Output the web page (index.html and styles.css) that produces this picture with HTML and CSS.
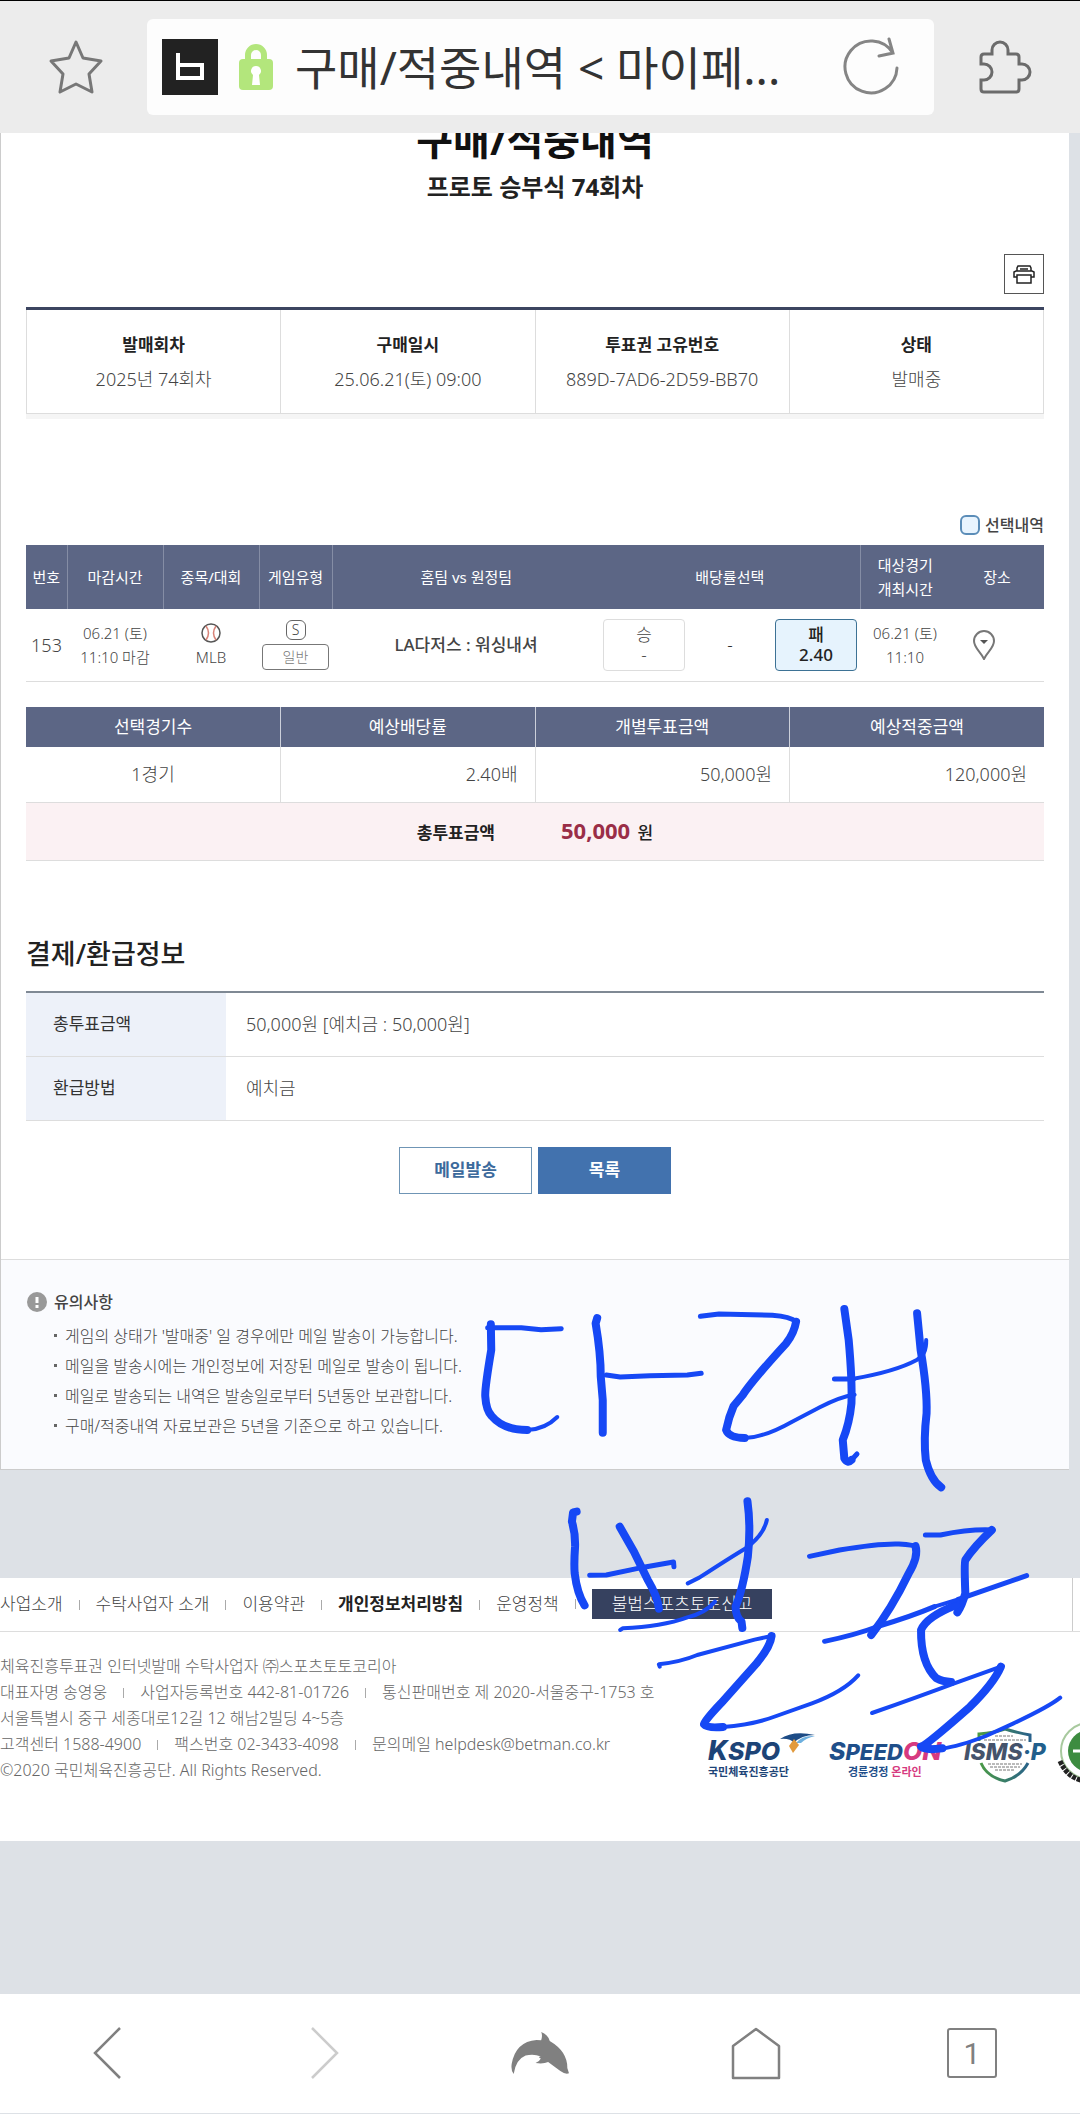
FILE: index.html
```html
<!DOCTYPE html>
<html lang="ko">

<head>
    <meta charset="UTF-8">
    <meta name="viewport" content="width=device-width, initial-scale=1.0">
    <title>구매/적중내역 &lt; 마이페이지</title>
    <link rel="stylesheet" href="styles.css">
</head>

<body>

    <header class="toolbar">
        <button class="tool" aria-label="즐겨찾기">
            <svg width="56" height="56" viewBox="0 0 56 56" fill="none" stroke="#777" stroke-width="3" stroke-linejoin="round"><path d="M28 3L35 19L53 22L41 35L44 53L28 45L12 53L15 35L3 22L21 19Z" /></svg>
        </button>
        <div class="address">
            <svg width="56" height="56" viewBox="0 0 56 56"><path fill="#222" d="M0 0h56v56H0z" /><path d="M16 14V39H40V26H16" fill="none" stroke="#fff" stroke-width="4" /></svg>
            <svg class="lock" width="34" height="46" viewBox="0 0 34 46"><path d="M9 20V11a8 8 0 0 1 16 0v9" fill="none" stroke="#b3e67c" stroke-width="6" /><rect y="15" width="34" height="31" rx="4" fill="#b3e67c" /><path d="M17 22a5 5 0 0 1 3 9l1 10h-8l1-10a5 5 0 0 1 3-9z" fill="#fff" /></svg>
            <span class="address-text">구매/적중내역 &lt; 마이페...</span>
            <button class="tool" aria-label="새로고침">
                <svg width="60" height="60" viewBox="0 0 60 60" fill="none" stroke="#858585" stroke-width="3" stroke-linecap="round"><path d="M56 31A26 26 0 1 1 52 16M48 2L52 16L38 19" /></svg>
            </button>
        </div>
        <button class="tool" aria-label="확장 기능">
            <svg width="56" height="56" viewBox="0 0 56 56" fill="none" stroke="#6b6b6b" stroke-width="3"><path d="M4 25V18q0-3 3-3h8V11a8 8 0 0 1 16 0v4h8q3 0 3 3v7h3a8 8 0 0 1 0 16h-3v9q0 3-3 3H7q-3 0-3-3v-9h3a8 8 0 0 0 0-16z" /></svg>
        </button>
    </header>

    <main class="content">
        <h1>구매/적중내역</h1>
        <p class="round">프로토 승부식 74회차</p>

        <button class="print" aria-label="인쇄">
            <svg width="22" height="19" viewBox="0 0 22 19" fill="none" stroke="#222" stroke-width="1.5"><path d="M4 6V3l1-2h12l1 2v3M7 4h8M4 12H1V7l2-1h16l2 1v5h-3M4 10h14v8H4z" /></svg>
        </button>

        <table class="info">
            <thead>
                <tr><th>발매회차</th><th>구매일시</th><th>투표권 고유번호</th><th>상태</th></tr>
            </thead>
            <tbody>
                <tr><td>2025년 74회차</td><td>25.06.21(토) 09:00</td><td>889D-7AD6-2D59-BB70</td><td>발매중</td></tr>
            </tbody>
        </table>

        <p class="legend"><span class="swatch"></span>선택내역</p>

        <table class="games">
            <colgroup>
                <col class="col-no"><col class="col-time"><col class="col-time"><col class="col-type"><col><col class="col-odds"><col class="col-start"><col class="col-place">
            </colgroup>
            <thead>
                <tr>
                    <th>번호</th>
                    <th>마감시간</th>
                    <th>종목/대회</th>
                    <th>게임유형</th>
                    <th class="no-line">홈팀 vs 원정팀</th>
                    <th>배당률선택</th>
                    <th class="no-line">대상경기<br>개최시간</th>
                    <th>장소</th>
                </tr>
            </thead>
            <tbody>
                <tr>
                    <td class="no">153</td>
                    <td>06.21 (토)<br>11:10 마감</td>
                    <td>
                        <svg class="ball" width="20" height="20" viewBox="0 0 20 20" fill="none"><circle cx="10" cy="10" r="9" stroke="#555" stroke-width="1.5" /><path d="M5 3q5 7 0 14M15 3q-5 7 0 14" stroke="#d98378" stroke-width="1.5" /></svg>
                        MLB
                    </td>
                    <td><span class="single">S</span><span class="type">일반</span></td>
                    <td class="teams">LA다저스 : 워싱내셔</td>
                    <td class="odds-cell">
                        <div class="odds">
                            <button class="odd">승<br>-</button>
                            <span>-</span>
                            <button class="odd selected">패<br>2.40</button>
                        </div>
                    </td>
                    <td>06.21 (토)<br>11:10</td>
                    <td class="place">
                        <svg width="22" height="30" viewBox="0 0 22 30"><path d="M11 29C8 22 1 18 1 11a10 10 0 0 1 20 0C21 18 14 22 11 29z" fill="none" stroke="#777" stroke-width="2" /><path d="M7 10h8l-4 4z" fill="#555" /></svg>
                    </td>
                </tr>
            </tbody>
        </table>

        <table class="summary">
            <thead>
                <tr><th>선택경기수</th><th>예상배당률</th><th>개별투표금액</th><th>예상적중금액</th></tr>
            </thead>
            <tbody>
                <tr><td class="count">1경기</td><td>2.40배</td><td>50,000원</td><td>120,000원</td></tr>
            </tbody>
            <tfoot>
                <tr><td colspan="4"><span class="total-label">총투표금액</span><strong>50,000</strong> 원</td></tr>
            </tfoot>
        </table>

        <h2>결제/환급정보</h2>
        <table class="payment">
            <tr><th>총투표금액</th><td>50,000원 [예치금 : 50,000원]</td></tr>
            <tr><th>환급방법</th><td>예치금</td></tr>
        </table>

        <div class="buttons">
            <button class="btn">메일발송</button>
            <button class="btn btn-primary">목록</button>
        </div>

        <section class="notes">
            <h3>
                <svg width="20" height="20" viewBox="0 0 20 20"><circle cx="10" cy="10" r="10" fill="#999" /><path d="M10 5v6M10 13v3" stroke="#fff" stroke-width="3" /></svg>
                유의사항
            </h3>
            <ul>
                <li>게임의 상태가 '발매중' 일 경우에만 메일 발송이 가능합니다.</li>
                <li>메일을 발송시에는 개인정보에 저장된 메일로 발송이 됩니다.</li>
                <li>메일로 발송되는 내역은 발송일로부터 5년동안 보관합니다.</li>
                <li>구매/적중내역 자료보관은 5년을 기준으로 하고 있습니다.</li>
            </ul>
        </section>
    </main>

    <footer class="footer">
        <nav class="footer-nav">
            <a href="#">사업소개</a>
            <a href="#">수탁사업자 소개</a>
            <a href="#">이용약관</a>
            <a href="#" class="strong">개인정보처리방침</a>
            <a href="#">운영정책</a>
            <a href="#" class="report">불법스포츠토토신고</a>
            <span class="family"></span>
        </nav>
        <div class="footer-body">
            <address>
                <p><span>체육진흥투표권 인터넷발매 수탁사업자 ㈜스포츠토토코리아</span></p>
                <p><span>대표자명 송영웅</span><span>사업자등록번호 442-81-01726</span><span>통신판매번호 제 2020-서울중구-1753 호</span></p>
                <p><span>서울특별시 중구 세종대로12길 12 해남2빌딩 4~5층</span></p>
                <p><span>고객센터 1588-4900</span><span>팩스번호 02-3433-4098</span><span>문의메일 helpdesk@betman.co.kr</span></p>
                <p><span>©2020 국민체육진흥공단. All Rights Reserved.</span></p>
            </address>
            <div class="logos">
                <svg width="108" height="52" viewBox="0 0 108 52">
                    <path d="M72 8Q85-1 107 4Q93 4 86 12Q82 7 72 8z" fill="#1d4c86" />
                    <path d="M88 12Q94 4 107 5Q98 7 93 12z" fill="#6eb0df" />
                    <path d="M86 8l5 6-6 8-4-7z" fill="#e29a3c" />
                    <text class="logo-name" x="0" y="29" font-size="27" fill="#1d4477">K<tspan font-size="25">SPO</tspan></text>
                    <text class="logo-sub" x="0" y="45" font-size="11" fill="#1d4477">국민체육진흥공단</text>
                </svg>
                <svg width="122" height="52" viewBox="0 0 122 52">
                    <text class="logo-name" x="0" y="29" font-size="25" fill="#1f4f8a">S<tspan font-size="22">PEED</tspan><tspan fill="#d63a80">ON</tspan></text>
                    <text class="logo-sub" x="19" y="45" font-size="11" fill="#1f4f8a">경륜경정 <tspan fill="#d63a80">온라인</tspan></text>
                </svg>
                <svg width="82" height="52" viewBox="0 0 82 52">
                    <defs>
                        <linearGradient id="shield"><stop offset="0" stop-color="#4b9b45" /><stop offset="1" stop-color="#29618b" /></linearGradient>
                    </defs>
                    <path d="M15 10V3Q30 2 41-2Q54 2 66 4V11M17 32Q23 46 41 50Q57 45 64 32" fill="none" stroke="url(#shield)" stroke-width="3" />
                    <path d="M31 5h18M20 9h42M24 33h34M26 36h30M31 39h20" stroke="#777" stroke-width="1" stroke-dasharray="3 1" />
                    <text class="logo-name" x="0" y="29" font-size="23" fill="#45536b">ISMS<tspan fill="#225f8c">·P</tspan></text>
                </svg>
                <svg width="60" height="60" viewBox="0 0 60 60">
                    <circle cx="30" cy="28" r="28" fill="none" stroke="#a8c99e" stroke-width="2" />
                    <circle cx="30" cy="28" r="21" fill="#3d8c40" />
                    <path d="M1 38Q10 58 30 58" fill="none" stroke="#222" stroke-width="5" stroke-dasharray="4 1" />
                    <path d="M14 28h12l6 8" fill="none" stroke="#fff" stroke-width="3" />
                </svg>
            </div>
        </div>
    </footer>

    <nav class="bottom-bar">
        <button class="tool" aria-label="뒤로"><svg width="52" height="56" viewBox="0 0 52 56" fill="none" stroke="#808080" stroke-width="2.5"><path d="M38 3L13 28L38 53" /></svg></button>
        <button class="tool" aria-label="앞으로"><svg width="52" height="56" viewBox="0 0 52 56" fill="none" stroke="#ccc" stroke-width="2.5"><path d="M14 3L39 28L14 53" /></svg></button>
        <button class="tool" aria-label="메뉴"><svg width="63" height="48" viewBox="85 60 190 145"><path fill="#808080" d="M99 196Q90 185 93 165Q105 98 168 93L182 94Q187 80 182 69Q202 76 208 96Q262 128 261 178L266 194Q255 198 240 187L203 160Q190 166 165 163Q178 157 181 149Q170 145 181 143Q160 134 135 140Q105 152 99 196z" /></svg></button>
        <button class="tool" aria-label="홈"><svg width="52" height="56" viewBox="0 0 52 56" fill="none" stroke="#808080" stroke-width="2.5" stroke-linejoin="round"><path d="M3 21L26 4L49 21V53H3Z" /></svg></button>
        <button class="tool" aria-label="탭"><span class="tab-count">1</span></button>
    </nav>

    <!-- pen strokes over the page -->
    <svg class="ink" viewBox="0 0 1568 1500" preserveAspectRatio="none">
        <g class="thick">
            <path d="M78 133L79 210Q62 330 64 350Q66 390 80 408Q110 450 170 450" />
            <path d="M347 114L343 130Q356 220 356 290L361 360V458" />
            <path d="M850 125Q845 160 825 190Q740 300 715 345L692 378Q680 410 673 450Q680 473 720 474" />
            <path d="M972 87L983 180Q992 300 990 370Q985 430 968 480L972 535Q980 552 990 540" />
            <path d="M1156 100L1165 210Q1182 330 1180 400Q1172 480 1178 540Q1190 600 1217 622" />
            <path d="M295 695L286 697L283 725Q292 760 291 800Q288 850 290 880Q296 940 315 976" />
            <path d="M404 740L440 815L475 900Q500 950 503 986" />
            <path d="M727 664Q736 740 728 830Q715 930 697 980Q697 1010 712 1025L714 1044" />
            <path d="M788 1068Q785 1100 750 1150L660 1270Q620 1320 617 1333Q625 1345 665 1341" />
            <path d="M1152 798Q1160 830 1135 880Q1090 990 1040 1065" />
            <path d="M1345 750Q1300 800 1278 840Q1275 850 1278 940Q1270 975 1258 997" />
            <path d="M1255 975Q1180 1010 1166 1050Q1165 1150 1205 1195Q1220 1205 1242 1206" />
            <path d="M1368 1160Q1350 1210 1290 1280Q1180 1395 1166 1400Q1175 1412 1220 1405" />
        </g>
        <g class="medium">
            <path d="M70 143H155L205 149L256 146" />
            <path d="M370 285L405 291L480 287L575 285L610 280" />
            <path d="M608 109L655 102L790 106Q835 110 850 125" />
            <path d="M990 540L1004 522M947 297H995" />
            <path d="M328 886L370 885L450 865L540 846L541 860" />
            <path d="M884 829L960 810Q1060 790 1110 792Q1150 795 1154 800" />
            <path d="M1177 765H1215Q1290 747 1345 750" />
            <path d="M922 1084Q1000 1065 1060 1038Q1140 1010 1200 980M1260 958L1433 887" />
        </g>
        <g class="thin">
            <path d="M170 450Q215 448 246 411" />
            <path d="M720 474Q770 472 840 425L910 382Q960 350 998 344" />
            <path d="M995 296Q1100 275 1155 240Q1180 225 1179 180" />
            <path d="M576 910L605 893Q680 835 725 803Q768 765 776 720" />
            <path d="M405 1050L412 1045Q510 1040 575 1012Q620 1000 645 965" />
            <path d="M505 1160L503 1153Q560 1145 600 1125L745 1079L788 1068" />
            <path d="M665 1341Q740 1335 800 1308L890 1270Q970 1235 1007 1186" />
            <path d="M1200 980L1260 958" />
            <path d="M1042 1299Q1160 1250 1250 1210L1368 1160" />
            <path d="M1220 1405Q1260 1400 1330 1368L1400 1330Q1490 1280 1518 1253" />
        </g>
    </svg>
</body>

</html>
```
FILE: styles.css
```css
* {
    box-sizing: border-box;
}

body {
    margin: 0;
    position: relative;
    overflow-x: hidden;
    background: #dde1e6;
    color: #444;
    font-family: "Noto Sans", "Noto Sans CJK KR", sans-serif;
    font-size: 17px;
    font-weight: 300;
    line-height: 26px;
}

h1, h2, h3, p, ul {
    margin: 0;
    padding: 0;
}

button {
    font: inherit;
    color: inherit;
    padding: 0;
}

svg {
    display: block;
}

a {
    color: inherit;
    text-decoration: none;
}

table {
    width: 100%;
    table-layout: fixed;
    border-collapse: collapse;
}

th, td {
    padding: 0;
    text-align: center;
}

/* browser toolbar */
.toolbar {
    position: relative;
    display: flex;
    align-items: center;
    justify-content: space-between;
    height: 133px;
    padding: 0 47px 0 48px;
    border-top: 1px solid #000;
    background: #ececec;
}

.tool {
    display: flex;
    align-items: center;
    justify-content: center;
    border: none;
    background: none;
}

.address {
    display: flex;
    align-items: center;
    flex: 1;
    height: 96px;
    margin: 0 43px;
    padding: 0 33px 0 15px;
    border-radius: 6px;
    background: #fdfdfd;
}

.lock {
    margin: 0 22px 0 21px;
}

.address-text {
    flex: 1;
    color: #333;
    font-size: 46px;
    font-weight: 400;
    line-height: 60px;
    white-space: nowrap;
}

/* page */
.content {
    overflow: hidden;
    margin-right: 11px;
    padding: 0 25px;
    border-left: 1px solid #ccc;
    border-bottom: 1px solid #ccc;
    background: #fff;
}

h1 {
    margin-top: -18px;
    color: #111;
    font-size: 40px;
    line-height: 50px;
    text-align: center;
}

.round {
    margin: 4px 0 49px;
    color: #222;
    font-size: 24px;
    font-weight: 700;
    line-height: 36px;
    text-align: center;
}

.print {
    display: flex;
    align-items: center;
    justify-content: center;
    width: 40px;
    height: 40px;
    margin: 0 0 13px auto;
    border: 1px solid #555;
    background: #fff;
}

.info {
    border-top: 3px solid #3c4560;
    border-bottom: 1px solid #ddd;
    box-shadow: 0 5px 0 #f5f5f5;
}

.info th, .info td {
    border-left: 1px solid #ddd;
    border-right: 1px solid #ddd;
}

.info th {
    height: 53px;
    padding-top: 19px;
    color: #222;
    font-weight: 700;
}

.info td {
    height: 52px;
    padding-bottom: 16px;
    font-size: 18px;
}

.legend {
    display: flex;
    align-items: center;
    justify-content: flex-end;
    gap: 5px;
    margin: 98px 0 7px;
    font-size: 16px;
    font-weight: 500;
}

.swatch {
    width: 20px;
    height: 20px;
    border: 2px solid #5b8db8;
    border-radius: 6px;
    background: #e8f4fe;
}

.games {
    font-size: 15px;
    line-height: 24px;
}

.col-no {
    width: 41px;
}

.col-time {
    width: 96px;
}

.col-type {
    width: 73px;
}

.col-odds {
    width: 260px;
}

.col-start {
    width: 90px;
}

.col-place {
    width: 94px;
}

.games th {
    height: 64px;
    border-right: 1px solid #858da5;
    background: #5c6685;
    color: #fff;
    font-weight: 400;
}

.games th.no-line, .games th:last-child {
    border-right: none;
}

.games td {
    height: 72px;
    border-bottom: 1px solid #ddd;
}

.games .no {
    font-size: 18px;
}

.games .teams {
    font-size: 17px;
    font-weight: 500;
}

.ball {
    margin: 2px auto;
}

.single {
    display: block;
    width: 20px;
    height: 20px;
    margin: 0 auto 4px;
    border: 1px solid #666;
    border-radius: 6px;
    font-size: 14px;
    line-height: 18px;
}

.type {
    display: block;
    height: 26px;
    margin: 0 3px;
    border: 1px solid #777;
    border-radius: 4px;
    color: #777;
    font-size: 14px;
}

.odds {
    display: flex;
    align-items: center;
    justify-content: space-between;
    padding: 0 3px;
    color: #222;
    font-size: 17px;
}

.odd {
    width: 82px;
    height: 52px;
    border: 1px solid #ddd;
    border-radius: 4px;
    background: #fff;
    color: #444;
    line-height: 20px;
}

.odd.selected {
    border-color: #3d7295;
    background: #e6f3fd;
    color: #222;
    font-weight: 500;
}

.place svg {
    margin: 0 0 0 23px;
}

.summary {
    margin: 25px 0 74px;
}

.summary th {
    height: 40px;
    border-right: 1px solid #ccd0da;
    background: #5c6685;
    color: #fff;
    font-weight: 400;
}

.summary td {
    height: 56px;
    padding-right: 17px;
    border-right: 1px solid #ddd;
    border-bottom: 1px solid #ddd;
    font-size: 18px;
    text-align: right;
}

.summary th:last-child, .summary td:last-child {
    border-right: none;
}

.summary td.count {
    padding-right: 0;
    text-align: center;
}

.summary tfoot td {
    height: 58px;
    padding-right: 0;
    background: #fbf1f3;
    color: #222;
    font-size: 17px;
    font-weight: 500;
    text-align: center;
}

.total-label {
    margin-right: 66px;
    font-weight: 700;
}

.summary strong {
    margin-right: 3px;
    color: #9a2e47;
    font-size: 22px;
}

h2 {
    margin-bottom: 18px;
    color: #222;
    font-size: 27px;
    font-weight: 500;
    line-height: 38px;
}

.payment {
    border-top: 2px solid #7f8994;
}

.payment th, .payment td {
    height: 64px;
    border-bottom: 1px solid #ddd;
    text-align: left;
}

.payment th {
    width: 200px;
    padding-left: 27px;
    background: #edf1f9;
    color: #333;
    font-weight: 400;
}

.payment td {
    padding-left: 20px;
    font-size: 18px;
}

.buttons {
    display: flex;
    justify-content: center;
    gap: 6px;
    margin: 26px 0 65px;
}

.btn {
    width: 133px;
    height: 47px;
    border: 1px solid #6f95b5;
    background: #fff;
    color: #3c6a9c;
    font-weight: 700;
}

.btn-primary {
    border-color: #4272ae;
    background: #4272ae;
    color: #fff;
}

.notes {
    margin: 0 -25px;
    padding: 29px 26px 28px;
    border-top: 1px solid #ddd;
    background: #fafbfe;
    font-size: 16px;
}

.notes h3 {
    display: flex;
    align-items: center;
    gap: 7px;
    margin-bottom: 6px;
    font-size: 16px;
    font-weight: 500;
}

.notes ul {
    padding-left: 27px;
    list-style: none;
}

.notes li {
    display: flex;
    align-items: center;
    gap: 8px;
    font-size: 16px;
    line-height: 30px;
}

.notes li::before {
    content: "";
    width: 3px;
    height: 3px;
    background: #666;
}

/* footer */
.footer {
    overflow: hidden;
    margin: 108px 0 153px;
    background: #fff;
}

.footer-nav {
    display: flex;
    align-items: center;
    height: 54px;
    border-bottom: 1px solid #ddd;
    white-space: nowrap;
}

.footer-nav a + a::before, .footer address span + span::before {
    content: "";
    display: inline-block;
    width: 1px;
    height: 10px;
    margin: 0 16px;
    background: #aaa;
}

.footer-nav .strong {
    color: #222;
    font-weight: 700;
}

.footer-nav .report {
    position: relative;
    height: 30px;
    margin-left: 33px;
    padding: 0 20px;
    background: #36415f;
    color: #fff;
    line-height: 30px;
}

.footer-nav .report::before {
    position: absolute;
    top: 10px;
    left: -33px;
}

.family {
    width: 8px;
    height: 54px;
    margin-left: auto;
    border-left: 1px solid #ccc;
}

.footer-body {
    display: flex;
    align-items: flex-end;
    padding: 21px 0 58px;
}

address {
    flex: 0 0 708px;
    color: #666;
    font-size: 16px;
    font-style: normal;
}

.logos {
    display: flex;
    align-items: flex-end;
    gap: 13px;
}

.logos svg {
    flex: none;
    overflow: visible;
}

.logo-name {
    font-family: Inter, "Noto Sans", sans-serif;
    font-style: italic;
    font-weight: 800;
}

.logo-sub {
    font-weight: 700;
}

/* bottom bar */
.bottom-bar {
    display: flex;
    align-items: center;
    justify-content: space-around;
    height: 119px;
    background: #fff;
}

.bottom-bar .tool {
    flex: 1;
}

.tab-count {
    width: 50px;
    height: 50px;
    border: 2px solid #808080;
    border-radius: 3px;
    color: #808080;
    font-family: Roboto, sans-serif;
    font-size: 30px;
    font-weight: 400;
    line-height: 47px;
}

.ink {
    position: absolute;
    top: 1280px;
    left: 460px;
    width: 620px;
    height: 500px;
    fill: none;
    stroke: #1648f5;
    stroke-linecap: round;
    stroke-linejoin: round;
    pointer-events: none;
}

.ink path {
    vector-effect: non-scaling-stroke;
}

.thick {
    stroke-width: 8px;
}

.medium {
    stroke-width: 5px;
}

.thin {
    stroke-width: 4px;
}
```
